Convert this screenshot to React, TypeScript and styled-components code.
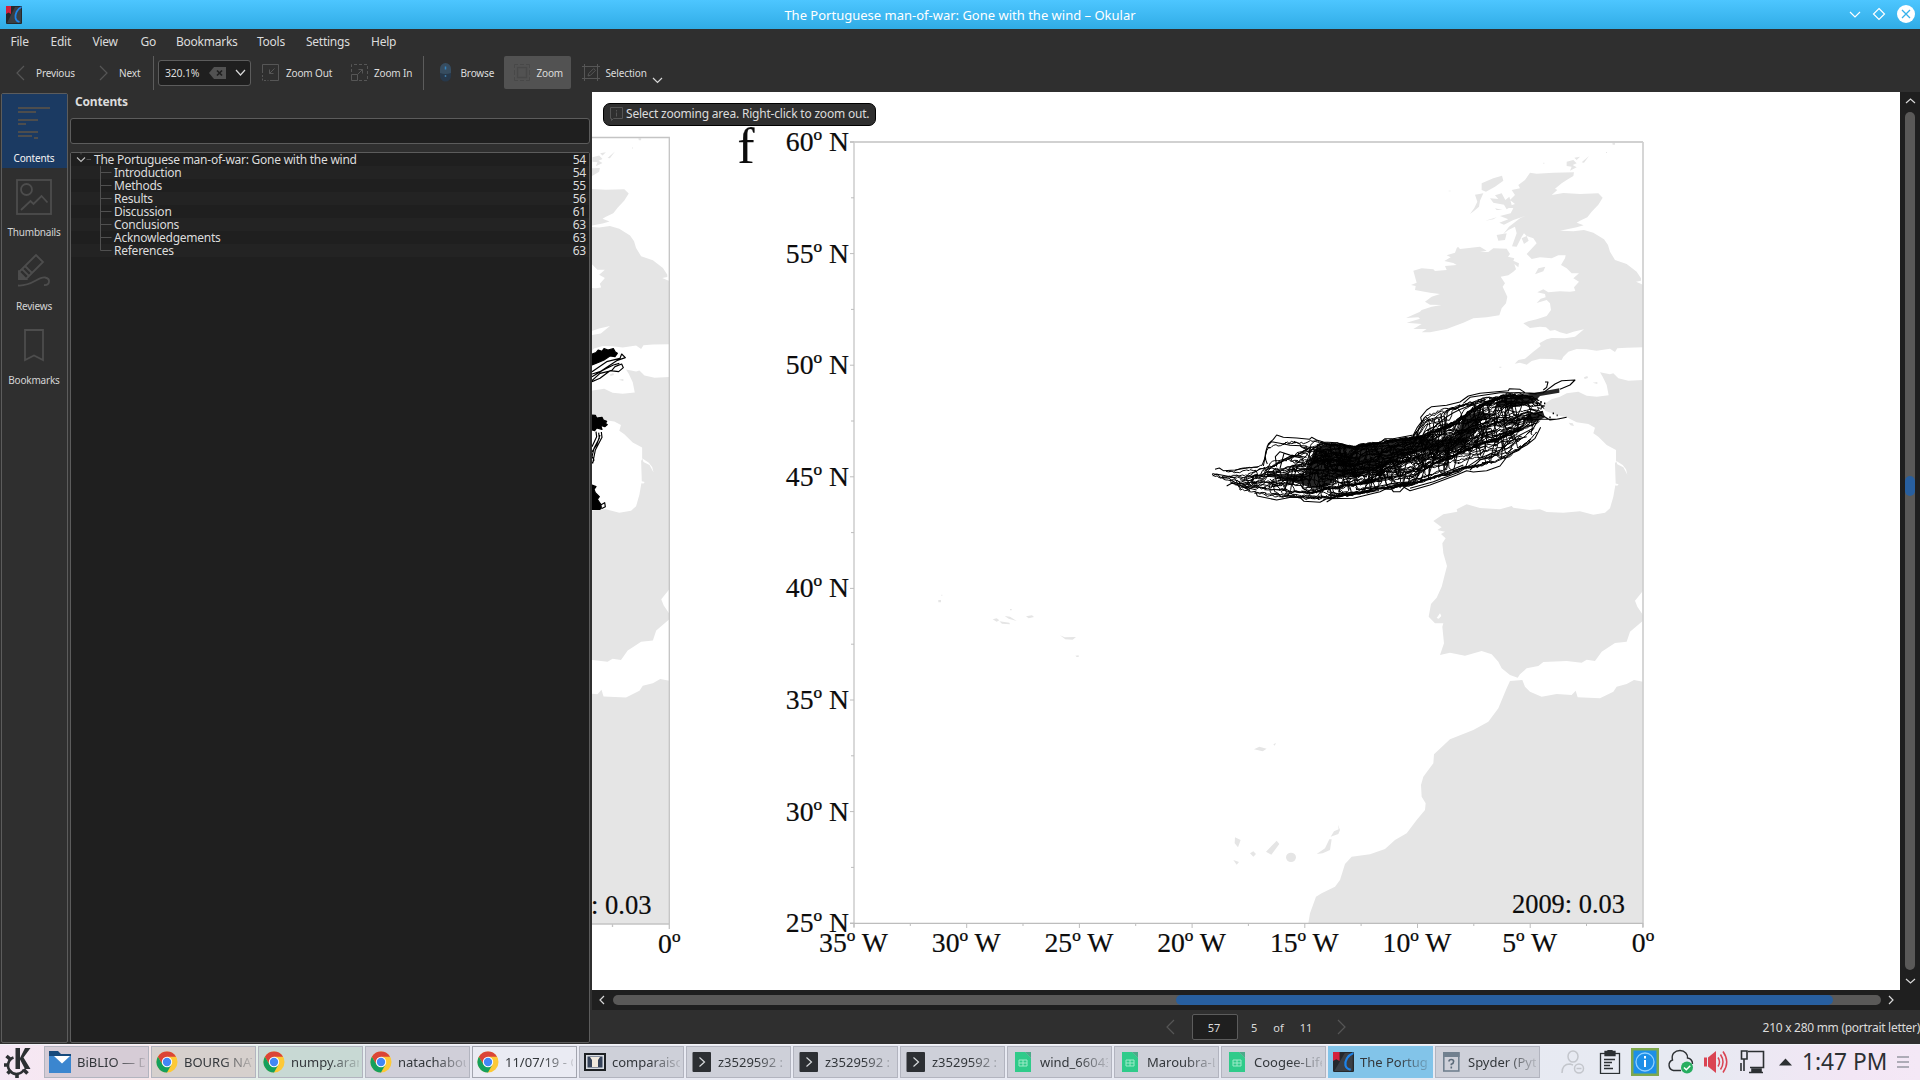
import React from "react";
import styled, { createGlobalStyle, css } from "styled-components";

const sans = `"Noto Sans", "Open Sans", sans-serif`;
const serif = `"Liberation Serif", "Times New Roman", serif`;

const Global = createGlobalStyle`
  * { box-sizing: border-box; }
  html, body { margin: 0; padding: 0; overflow: hidden; }
  body { font-family: ${sans}; background: #2f2f2f; }
  svg { display: block; flex: none; }
`;

const Desktop = styled.div`
  width: 1920px;
  height: 1080px;
  display: flex;
  flex-direction: column;
  background: #2f2f2f;
  color: #dcdcdc;
  overflow: hidden;
`;

/* ---------- window frame ---------- */

const TitleBar = styled.header`
  flex: none;
  height: 29px;
  display: grid;
  grid-template-columns: 120px 1fr 120px;
  align-items: center;
  background: linear-gradient(#4dc6ff, #30ace6);
`;

const TitleIcon = styled.div`
  padding-left: 6px;
`;

const Title = styled.h1`
  margin: 0;
  text-align: center;
  font-size: 13px;
  line-height: 28px;
  font-weight: 400;
  color: #fff;
`;

const WindowButtons = styled.div`
  display: flex;
  justify-content: flex-end;
  align-items: center;
  gap: 7px;
  padding-right: 5px;
  padding-bottom: 1px;
`;

const MenuBar = styled.nav`
  flex: none;
  height: 25px;
  padding-left: 10.5px;
  display: flex;
`;

const MenuItem = styled.span<{ $w: number }>`
  width: ${(p) => p.$w}px;
  font-size: 12px;
  line-height: 25px;
  letter-spacing: -0.25px;
  white-space: nowrap;
`;

const ToolBar = styled.div`
  flex: none;
  height: 38px;
  display: flex;
  align-items: center;
  padding-bottom: 1px;
`;

const ToolButton = styled.div<{ $w: number; $pad: number; $gap: number; $on?: boolean }>`
  width: ${(p) => p.$w}px;
  height: 33px;
  padding-left: ${(p) => p.$pad}px;
  display: flex;
  align-items: center;
  gap: ${(p) => p.$gap}px;
  font-size: 10px;
  line-height: 14px;
  letter-spacing: -0.15px;
  white-space: nowrap;
  border-radius: 2px;
  ${(p) => p.$on && css`background: #525252;`}
`;

const ToolSeparator = styled.div`
  width: 1px;
  height: 34px;
  background: #5c5c5c;
`;

const ZoomBox = styled.div`
  width: 93px;
  height: 26px;
  margin: 0 3px 0 4px;
  padding: 0 4px 0 6px;
  display: flex;
  align-items: center;
  border: 1px solid #5c5c5c;
  border-radius: 3px;
  background: #1f1f1f;
  font-size: 10.5px;
  letter-spacing: -0.2px;
`;

const ZoomValue = styled.span`
  flex: 1;
`;

const ZoomTools = styled.div`
  display: flex;
  align-items: center;
  gap: 9px;
`;

/* ---------- main area ---------- */

const Main = styled.main`
  flex: none;
  height: 952px;
  display: flex;
`;

const SideTabs = styled.aside`
  width: 67px;
  height: 950px;
  margin: 1px 0 0 1px;
  border: 1px solid #5c5c5c;
  border-radius: 2px;
`;

const SideTab = styled.div<{ $on?: boolean }>`
  height: 74px;
  display: flex;
  flex-direction: column;
  align-items: center;
  padding-top: 9px;
  padding-right: 1px;
  background: ${(p) => (p.$on ? "#1b3a62" : "transparent")};
`;

const SideLabel = styled.span<{ $on?: boolean }>`
  margin-top: 8px;
  font-size: 10px;
  line-height: 14px;
  letter-spacing: -0.2px;
  color: ${(p) => (p.$on ? "#f4f4f4" : "#d4d4d4")};
`;

const ContentsPanel = styled.section`
  width: 520px;
  height: 951px;
  margin: 0 2px;
  display: flex;
  flex-direction: column;
`;

const PanelTitle = styled.h2`
  margin: 0;
  padding-left: 5px;
  height: 26px;
  font-size: 12px;
  line-height: 19px;
  font-weight: 700;
  letter-spacing: -0.2px;
`;

const SearchBox = styled.div`
  height: 26px;
  margin-bottom: 8px;
  border: 1px solid #5c5c5c;
  border-radius: 3px;
  background: #1f1f1f;
`;

const Tree = styled.div`
  flex: 1;
  border: 1px solid #5c5c5c;
  border-radius: 2px;
  background: #1f1f1f;
`;

const TreeRow = styled.div<{ $alt: boolean }>`
  height: 13px;
  display: flex;
  align-items: center;
  padding-right: 3px;
  background: ${(p) => (p.$alt ? "#232323" : "#1f1f1f")};
  font-size: 12px;
  line-height: 13px;
  letter-spacing: -0.2px;
  white-space: nowrap;
`;

const RowName = styled.span`
  flex: 1;
  letter-spacing: -0.25px;
`;

const DocColumn = styled.section`
  flex: 1;
  display: flex;
  flex-direction: column;
`;

const DocRow = styled.div`
  height: 898px;
  display: flex;
`;

const Page = styled.div`
  position: relative;
  width: 1308px;
  height: 898px;
  background: #fff;
  overflow: hidden;
`;

const Notice = styled.div`
  position: absolute;
  left: 11px;
  top: 11px;
  width: 273px;
  height: 23px;
  display: flex;
  align-items: center;
  gap: 3px;
  padding: 0 0 2px 6px;
  border: 1px solid #000;
  border-radius: 7px;
  background: #2f2f2f;
  font-size: 12px;
  letter-spacing: -0.2px;
  line-height: 19px;
  white-space: nowrap;
`;

const VScroll = styled.div`
  width: 20px;
  padding: 6px 0 6px;
  display: flex;
  flex-direction: column;
  align-items: center;
  justify-content: space-between;
  background: #1f1f1f;
`;

const VGroove = styled.div`
  width: 10px;
  height: 858px;
  padding-top: 364px;
  border-radius: 5px;
  background: #5a5958;
`;

const VThumb = styled.div`
  height: 20px;
  border-radius: 5px;
  background: #285f9f;
`;

const HScroll = styled.div`
  height: 20px;
  padding: 0 26px 0 7px;
  display: flex;
  align-items: center;
  justify-content: space-between;
  background: #1f1f1f;
`;

const HGroove = styled.div`
  width: 1268px;
  height: 10px;
  padding-left: 563px;
  border-radius: 5px;
  background: #5a5958;
`;

const HThumb = styled.div`
  width: 657px;
  height: 10px;
  border-radius: 5px;
  background: #285f9f;
`;

const StatusBar = styled.div`
  height: 34px;
  display: flex;
  align-items: center;
  padding-left: 574px;
  font-size: 11px;
  white-space: nowrap;
`;

const PageField = styled.div`
  width: 46px;
  height: 26px;
  margin: 0 13px 0 17px;
  padding-right: 2px;
  display: flex;
  align-items: center;
  justify-content: center;
  border: 1px solid #5c5c5c;
  border-radius: 2px;
  background: #1f1f1f;
`;

const PageCount = styled.div`
  width: 86px;
  display: flex;
  gap: 16px;
`;

const PageSize = styled.span`
  margin-left: auto;
  font-size: 12px;
  letter-spacing: -0.28px;
`;

/* ---------- task bar ---------- */

const TaskBar = styled.footer`
  flex: none;
  height: 36px;
  display: flex;
  align-items: center;
  box-shadow: inset 0 1px #f3f3f8;
  background: linear-gradient(90deg, #f5e7f5 0, #f8e8ea 160px, #dff0e9 280px, #e9eaf3 420px, #e7eaf2 1700px, #f3e6f5 1850px, #f4e8f6 100%);
`;

const Launcher = styled.div`
  width: 44px;
  padding-left: 3px;
`;

const Tasks = styled.div`
  display: flex;
  gap: 2px;
`;

const Task = styled.div<{ $kind?: "light" | "active"; $tint?: string }>`
  width: 105px;
  height: 32px;
  padding-left: 4px;
  display: flex;
  align-items: center;
  gap: 6px;
  overflow: hidden;
  color: #33373b;
  border: 1px solid #b2b4bf;
  background: ${(p) => p.$tint ?? "#ced0d9"};
  ${(p) => p.$kind === "light" && css`background: #eaebf3; border-color: #a2a4ae;`}
  ${(p) => p.$kind === "active" && css`background: #82c4e9; border-color: #82c4e9;`}
`;

const TaskName = styled.span`
  flex: 1;
  overflow: hidden;
  font-size: 13px;
  line-height: 20px;
  white-space: nowrap;
  margin-right: 3px;
  mask-image: linear-gradient(90deg, #000 55%, rgba(0, 0, 0, 0.15) 100%);
`;

const Tray = styled.div`
  flex: 1;
  display: flex;
  align-items: center;
  padding-left: 21px;
`;

const TraySlot = styled.div<{ $w: number }>`
  width: ${(p) => p.$w}px;
`;

const Clock = styled.span`
  width: 95px;
  font-size: 22.7px;
  line-height: 30px;
  color: #2c3033;
  white-space: nowrap;
`;

/* ---------- small icons ---------- */

type ChevronProps = { d: "l" | "r" | "u" | "d"; w: number; h: number; c: string };
const Chevron = ({ d, w, h, c }: ChevronProps) => {
  const pts = {
    l: `${w - 1},1 1,${h / 2} ${w - 1},${h - 1}`,
    r: `1,1 ${w - 1},${h / 2} 1,${h - 1}`,
    u: `1,${h - 1} ${w / 2},1 ${w - 1},${h - 1}`,
    d: `1,1 ${w / 2},${h - 1} ${w - 1},1`,
  }[d];
  return (
    <svg width={w} height={h}>
      <polyline points={pts} fill="none" stroke={c} strokeWidth="1.2" />
    </svg>
  );
};

const OkularIcon = ({ w, h }: { w: number; h: number }) => (
  <svg width={w} height={h} viewBox="0 0 16 18" preserveAspectRatio="none">
    <rect width="16" height="18" rx="1" fill="#25282c" />
    <path d="M1 17L9 1h6v16z" fill="#3a3f45" />
    <path d="M0 0h5v8L2.500 6.500 0 8z" fill="#d4213d" />
    <path d="M15.500 1C11 3 9 8 9.500 12q.5 3 4 4" fill="none" stroke="#1d84ea" strokeWidth="1.700" />
  </svg>
);

const g = "#565656";

const ZoomOutIcon = () => (
  <svg width="17" height="17" fill="none" stroke={g}>
    <path d="M.5 9V.5h16v16H8" />
    <path d="M12.500 4.500l-5 5M7.500 5.500v4h4" />
    <path d="M.5 11v5.500h6" strokeDasharray="2 1.500" />
  </svg>
);

const ZoomInIcon = () => (
  <svg width="17" height="17" fill="none" stroke={g}>
    <path d="M.5 8V.5h16v16H8" strokeDasharray="3 2" />
    <path d="M.5 10.500h6v6h-6zM6.500 10.500l5-5M7.500 5.500h4v4" />
  </svg>
);

const MouseIcon = () => (
  <svg width="13" height="19">
    <rect x="1" y=".5" width="11" height="18" rx="5.500" fill="#27384a" />
    <path d="M6.500 0a5.500 6 0 0 0-5.500 6v4q5.500 2 11 0V6a5.500 6 0 0 0-5.500-6z" fill="#374d60" />
    <path d="M6.500 3.500v3" stroke="#3584c0" strokeWidth="1.500" />
    <circle cx="6.500" cy="13" r=".9" fill="#3f7ba8" />
  </svg>
);

const ZoomIcon = () => (
  <svg width="16" height="17" fill="none" stroke="#484848">
    <rect x="3.500" y="3.500" width="9" height="10" strokeWidth="1.300" />
    <path d="M.5 4V.5H4M6 .5h4M12 .5h3.500V4M15.500 6v5M15.500 13v3.500H12M10 16.500H6M4 16.500H.5V13M.5 11V6" />
  </svg>
);

const SelectionIcon = () => (
  <svg width="18" height="17" fill="none" stroke={g}>
    <path d="M0 2.500h18M0 14.500h18M2.500 0v17M15.500 0v17" />
    <path d="M6 12l.7-2.500 5-5 1.800 1.800-5 5z" />
  </svg>
);

const ClearIcon = () => (
  <svg width="17" height="12">
    <path d="M0 6l5-6h12v12H5z" fill="#525252" />
    <path d="M8 3.500l5 5M13 3.500l-5 5" stroke="#1f1f1f" strokeWidth="1.700" />
  </svg>
);

const tab = "#4d4d4d";
const ContentsIcon = () => (
  <svg width="40" height="40" fill={tab}>
    <path d="M4 4h32v2H4zM4 8h18v2H4zM4 16h20v2H4zM4 20h8v2H4zM4 28h20v2H4zM4 32h14v2H4zM20 34h4v2h-4z" />
  </svg>
);
const ThumbsIcon = () => (
  <svg width="40" height="40" fill="none" stroke={tab} strokeWidth="1.800">
    <rect x="3" y="3" width="34" height="34" />
    <circle cx="12.500" cy="12.500" r="5.500" />
    <path d="M7 33l9.500-9 3 3 8-8 6 6.500" />
  </svg>
);
const ReviewsIcon = () => (
  <svg width="40" height="40" fill="none" stroke={tab} strokeWidth="1.800">
    <path d="M5 21L22 4l7 7-17 17H5z" />
    <path d="M5 21l7 7H5zM8 18l7 7M11 15l7 7" fill={tab} />
    <path d="M4 34.500c14 1 20-9 27-8 6 1 5 8-1 7.500" />
  </svg>
);
const BookmarkIcon = () => (
  <svg width="40" height="40" fill="none" stroke={tab} strokeWidth="1.800">
    <path d="M11 5h18v30l-9-4.500L11 35z" />
  </svg>
);

const TreeBranch = ({ kind }: { kind: "root" | "mid" | "last" }) =>
  kind === "root" ? (
    <svg width="23" height="13" fill="none">
      <path d="M6 4.500l4 4 4-4" stroke="#c0c0c0" strokeWidth="1.100" />
      <path d="M15.500 6.500h4.500M10 0v1.500" stroke="#505050" />
    </svg>
  ) : (
    <svg width="43" height="13" fill="none" stroke="#505050">
      <path d={kind === "mid" ? "M29.500 0v13M29.500 6.500h11" : "M29.500 0v6.500h11"} />
    </svg>
  );

/* ---------- task icons ---------- */

const KdeIcon = () => (
  <svg width="29" height="32" viewBox="0 0 29 32">
    <path d="M10.500 11.500A8.500 8.500 0 1 0 21 23.500" fill="none" stroke="#2c3033" strokeWidth="2.600" />
    <path d="M3.500 10l3.500 3M1 19h5M4.500 27.500l3.500-3.500M14 32v-5M24.500 27.500l-4-4" stroke="#2c3033" strokeWidth="3.600" />
    <path d="M12.500 2h4.500v10L22 2h5.500L20.500 11.500 27.500 23H22L17 13.500V23h-4.500z" fill="#2c3033" />
  </svg>
);
const FolderIcon = () => (
  <svg width="22" height="22">
    <path d="M0 0h9l3 3h10v8H0z" fill="#174a7c" />
    <path d="M0 5h22v17H0z" fill="#3b86cf" />
    <path d="M5 5h16l-8 7.500z" fill="#fff" />
  </svg>
);
const ChromeIcon = () => (
  <svg width="22" height="24" viewBox="0 0 22 24">
    <circle cx="11" cy="12" r="10.500" fill="#fdc936" />
    <path d="M1.900 6.750A10.500 10.500 0 0 1 20.100 6.750H11L6.500 14.600z" fill="#db4437" />
    <path d="M1.900 6.750A10.500 10.500 0 0 0 11 22.500L15.500 14.600 11 17 6.500 14.600z" fill="#14a05c" />
    <circle cx="11" cy="12" r="5.200" fill="#fff" />
    <circle cx="11" cy="12" r="4.200" fill="#4387f5" />
  </svg>
);
const ImageIcon = () => (
  <svg width="22" height="18">
    <rect x="1" y="1" width="20" height="16" fill="#d8dce2" stroke="#1d2023" strokeWidth="2" />
    <rect x="3.500" y="3.500" width="15" height="11" fill="#36435a" />
    <path d="M6 4h10l-2 3v7H8V7z" fill="#f1e9dd" />
  </svg>
);
const TermIcon = () => (
  <svg width="21" height="20">
    <rect x="1.500" width="18.500" height="20" rx="1" fill="#2c2f33" />
    <path d="M8.500 5.500l5 4.500-5 4.500" fill="none" stroke="#d7dadd" strokeWidth="1.200" />
  </svg>
);
const SheetIcon = () => (
  <svg width="22" height="20">
    <path d="M3 0h10l6 6v14H3z" fill="#2fcb8a" />
    <path d="M13 0l6 6V0z" fill="#159a68" opacity=".7" />
    <path d="M7 8h8v6H7zM7 11h8M11 8v6" fill="none" stroke="#9debc8" />
  </svg>
);
const UnknownIcon = () => (
  <svg width="22" height="20">
    <rect x="3.800" y="1" width="15" height="18" fill="none" stroke="#71808f" strokeWidth="1.600" />
    <rect x="3" y="0" width="16.600" height="5" fill="#71808f" />
    <path d="M9 9.500q0-2 2.300-2t2.300 2-2.300 2.800v1M11.300 14.500v2" fill="none" stroke="#5b6a79" strokeWidth="1.600" />
  </svg>
);

const tasks: { name: string; icon: React.ReactNode; kind?: "light" | "active"; tint?: string }[] = [
  { name: "BiBLIO — D", icon: <FolderIcon />, tint: "#d6ccd6" },
  { name: "BOURG NAT", icon: <ChromeIcon />, tint: "#d6d0cd" },
  { name: "numpy.aran", icon: <ChromeIcon />, tint: "#c8d9d4" },
  { name: "natachabou", icon: <ChromeIcon />, tint: "#d0cfd9" },
  { name: "11/07/19 - G", icon: <ChromeIcon />, kind: "light" },
  { name: "comparaiso", icon: <ImageIcon /> },
  { name: "z3529592 :", icon: <TermIcon /> },
  { name: "z3529592 :", icon: <TermIcon /> },
  { name: "z3529592 :", icon: <TermIcon /> },
  { name: "wind_66043", icon: <SheetIcon /> },
  { name: "Maroubra-L", icon: <SheetIcon /> },
  { name: "Coogee-Life", icon: <SheetIcon /> },
  { name: "The Portug", icon: <OkularIcon w={21} h={20} />, kind: "active" },
  { name: "Spyder (Pyt", icon: <UnknownIcon /> },
];

const ink = "#2c3033";
const UserIcon = () => (
  <svg width="24" height="24" fill="none" stroke="#c3c6cc" strokeWidth="1.500">
    <ellipse cx="12" cy="6.500" rx="5" ry="5.500" />
    <path d="M1 23q0-9 8-9l3 1" />
    <circle cx="18" cy="18.500" r="4.500" />
    <path d="M15.500 18.500h5" />
  </svg>
);
const ClipIcon = () => (
  <svg width="22" height="24" fill="none" stroke={ink} strokeWidth="1.300">
    <rect x="1.500" y="3.500" width="19" height="20" />
    <path d="M6 1.500h10v4H6z" fill={ink} />
    <path d="M9 0h4v2H9z" fill={ink} />
    <path d="M5 9.500h11M5 12.500h8M5 15.500h6M5 18.500h9" />
  </svg>
);
const InfoIcon = () => (
  <svg width="28" height="28">
    <rect width="28" height="28" fill="#7ea84d" />
    <rect x="2.500" y="2.500" width="23" height="23" fill="#1d8fe8" />
    <circle cx="14" cy="14" r="9" fill="none" stroke="#8fd0ff" strokeWidth="1.300" />
    <path d="M14 8v2.500M14 12v7" stroke="#fff" strokeWidth="2" />
  </svg>
);
const CloudIcon = () => (
  <svg width="28" height="26">
    <path d="M14 21.500H6.500a5.500 5.500 0 0 1-1-10.500C4 5 8 1.500 13 1.500s8 4 7.500 7.500c3 .5 5 3 5 6" fill="none" stroke={ink} strokeWidth="1.400" />
    <circle cx="20" cy="18.500" r="6" fill="#27ae60" />
    <path d="M17 18.500l2.300 2.300 4-4" fill="none" stroke="#fff" strokeWidth="1.500" />
  </svg>
);
const SpeakerIcon = () => (
  <svg width="25" height="24" fill="none" stroke="#da4453" strokeWidth="1.800">
    <path d="M0 7.500h3v9H0z" fill="#da4453" stroke="none" />
    <path d="M4 7.500L12 1v22L4 16.500z" fill="#da4453" stroke="none" />
    <path d="M14 7.500q3 4.500 0 9M16.500 4.500q5 7.500 0 15M19 1.500q7.500 10.500 0 21" strokeWidth="1.500" />
  </svg>
);
const NetIcon = () => (
  <svg width="26" height="24" fill="none" stroke={ink} strokeWidth="1.600">
    <path d="M8 1.500h15.500v16H10" />
    <path d="M1.500 1h5.500v8H1.500zM4 9v12M1 13v8" />
    <path d="M12 19h9v3H12zM9 22.500h14" fill={ink} />
  </svg>
);

/* ---------- map ---------- */

/* Land outlines in third-of-a-pixel units, origin at (1380, 130) of the screen. */
const land = [
  "M450 128L470 131 520 128 582 127 580 138 560 150 545 160 525 176 532 180 515 195 550 189 600 192 655 190 668 203 655 224 635 245 622 262 600 272 590 278 611 286 590 292 540 302 580 304 612 300 640 308 672 328 684 345 690 365 705 390 740 402 770 425 783 445 783 452 768 455 789 464V652L740 653 712 655 705 666 690 656 650 662 620 658 590 657 565 665 550 680 545 690 515 687 480 686 455 693 440 704 420 698 404 701 415 690 435 686 460 665 482 648 478 640 500 628 515 624 555 625 585 620 612 598 580 605 560 612 540 607 525 600 510 602 498 592 480 590 450 594 430 580 445 574 470 568 500 558 513 540 510 520 500 510 470 519 482 506 497 502 495 492 472 487 490 478 505 487 540 484 570 485 586 483 582 472 597 455 580 445 597 430 575 430 560 415 543 405 555 385 557 376 535 376 515 385 480 382 455 387 462 394 440 372 470 340 460 325 440 318 432 310 425 320 410 350 396 349 410 310 405 290 385 300 370 312 387 290 420 265 435 258 400 270 372 284 358 278 385 268 360 258 392 250 400 235 380 230 405 222 390 210 405 195 395 180 420 175 415 165 435 150Z",
  "M230 355L234 350 240 357 260 355 300 350 320 362 300 366 325 366 340 355 380 356 390 372 384 380 403 385 400 392 417 400 415 412 403 402 408 418 400 425 385 436 362 440 375 460 368 470 382 500 378 520 365 535 358 556 320 562 280 565 250 578 200 597 150 607 125 607 140 597 100 597 125 582 80 578 120 566 115 562 78 564 120 545 125 540 155 530 185 525 150 524 135 515 155 500 180 492 150 488 105 480 107 468 93 465 110 458 100 422 125 415 160 418 165 423 200 420 195 408 230 405 220 399 193 393 212 382 200 376 225 368Z",
  "M305 160L340 145 366 137 370 152 345 170 318 185 305 180Z",
  "M285 194L310 190 300 212 297 230 283 242 270 252 283 234 292 215Z",
  "M330 205L355 207 345 196 365 190 376 210 388 200 396 228 380 238 372 224 340 218Z",
  "M316 272L350 262 340 268Z M350 315L380 310 375 330 355 332Z M425 325L440 318 446 332 432 342Z M345 235L368 240 350 240Z",
  "M465 433L475 415 496 410 490 424Z",
  "M560 95L580 90 590 100 578 105 590 112 570 122 575 110 560 108Z M583 83L600 80 590 90Z M605 97L627 78 612 98Z",
  "M697 38h8v6h-7z M678 66h3v3h-3z M490 98h3v3h-3z M206 182h6v2h-6z M358 710h6v3h-6z",
  "M789 750L745 752 715 745 700 730 690 733 660 727 668 740 680 765 686 796 650 800 620 797 595 785 560 790 540 800 515 808 492 822 495 842 530 855 560 862 590 877 625 882 645 893 640 910 655 920 680 945 708 960 708 995 705 1000 707 1060 700 1100 690 1135 675 1148 640 1154 600 1144 550 1148 500 1146 480 1138 450 1140 400 1133 395 1128 360 1138 300 1134 260 1123 230 1138 232 1145 190 1153 160 1173 185 1192 172 1200 195 1205 183 1212 197 1225 187 1240 190 1270 201 1308 185 1370 170 1403 153 1422 146 1460 165 1480 190 1480 187 1490 192 1540 180 1575 210 1568 255 1577 305 1563 335 1573 355 1595 365 1615 390 1635 413 1643 420 1633 440 1615 475 1608 490 1596 560 1593 605 1598 620 1589 645 1593 665 1565 705 1539 740 1535 750 1505 789 1472V1455L772 1430 765 1412 789 1382Z",
  "M789 1655L762 1650 740 1662 710 1670 700 1685 660 1705 593 1702 587 1682 575 1695 530 1692 485 1700 450 1685 435 1670 427 1650 390 1653 380 1675 355 1735 325 1775 280 1800 210 1828 162 1873 160 1900 130 1940 123 1965 125 2000 137 2020 135 2040 110 2070 80 2110 45 2130 15 2157-30 2173-85 2180-105 2202-120 2250-135 2270-175 2290-192 2300-210 2350-215 2380H789Z",
  "M-282 2182a15 14 0 1 0 30 0a15 14 0 1 0-30 0 M-190 2172L-165 2155-152 2128-145 2128-150 2160-172 2170Z M-148 2120L-138 2104-124 2098-126 2084-120 2100-125 2112Z",
  "M-435 2122L-418 2130-426 2152-436 2140Z M-390 2170l10-6 8 8-8 8z M-342 2165L-310 2132-302 2142-326 2174Z M-440 2190L-423 2196-430 2204Z M-378 1858L-362 1850-340 1856-352 1864Z M-320 1843l8-4-4 8z",
  "M-1325 1410h8v7h-8z M-1316 1394h3v3h-3z M-1162 1468l12-3 8 6-8 4z M-1142 1474l30 4 2 5-24-2z M-1126 1458l16 2 20 13-24-7z M-1062 1459l18-3 6 5-16 4z M-1110 1437h5v4h-5z M-960 1516l14 6 34-1-10 8-22-1z M-914 1577l10-1 0 5-6 0z",
];

/* White inlets cut into the land. */
const inlets = [
  "M708 992L728 1005 738 1018 742 1034 730 1012 712 1003Z",
  "M170 1464L180 1450 184 1458 176 1466Z",
  "M704 1060l12 3-4 4-8-1z",
];

const isletsFrance = "M612 742l10-4 2 6-10 3z M638 758l14-2 0 6z M566 878l12 2 4 8-10-2z";

const Land = () => (
  <g transform="translate(1380 130) scale(.33333)">
    <path d={land.join(" ")} fill="#e5e5e5" />
    <path d={isletsFrance} fill="#e5e5e5" />
    <path d={inlets.join(" ")} fill="#fff" />
  </g>
);

/* Seeded generator so the drift tracks are identical on each render. */
const seeded = (seed: number) => () => {
  seed = (seed * 1664525 + 1013904223) % 4294967296;
  return seed / 4294967296;
};

/* x, upper edge, lower edge of the bundle of tracks */
const envelope = [
  [100, 398, 412], [150, 390, 438], [225, 382, 458], [250, 372, 462], [262, 325, 464],
  [290, 312, 466], [400, 304, 476], [450, 310, 472], [520, 320, 462], [600, 308, 448],
  [650, 298, 440], [700, 288, 432], [740, 222, 418], [800, 208, 402], [850, 196, 385],
  [900, 180, 375], [980, 164, 352], [1020, 160, 325], [1060, 172, 290], [1085, 190, 255], [1100, 205, 235],
];
const core = [
  [100, 400, 410], [200, 396, 445], [260, 385, 445], [380, 330, 460], [430, 312, 450],
  [520, 320, 435], [620, 304, 415], [720, 292, 390], [820, 250, 350], [880, 205, 320],
  [960, 172, 295], [1040, 168, 260], [1085, 195, 245], [1100, 210, 230],
];
const edge = (t: number[][], x: number, k: number) => {
  for (let i = 1; i < t.length; i++)
    if (x <= t[i][0]) {
      const r = (x - t[i - 1][0]) / (t[i][0] - t[i - 1][0]);
      return t[i - 1][k] + r * (t[i][k] - t[i - 1][k]);
    }
  return t[t.length - 1][k];
};

const makeTracks = (table: number[][], count: number, seed: number) => {
  const rnd = seeded(seed);
  const out: string[] = [];
  for (let n = 0; n < count; n++) {
    const far = rnd();
    let x = far < 0.35 ? 100 + rnd() * 140 : 250 + rnd() * 230;
    const end = 1000 + rnd() * 95;
    let f = rnd();
    let aim = f;
    const p = rnd() * 6;
    let d = "";
    while (x < end) {
      if (rnd() < 0.1) aim = Math.min(1, Math.max(0, aim + (rnd() - 0.5) * 0.9));
      const jump = Math.abs(aim - f) > 0.12;
      f += (aim - f) * 0.4;
      const u = edge(table, x, 1);
      const l = edge(table, x, 2);
      const y = u + (l - u) * f + Math.sin(x / 11 + p) * 2.5 + (rnd() - 0.5) * 6;
      d += (d ? "L" : "M") + x.toFixed(0) + " " + y.toFixed(0);
      x += rnd() < 0.12 ? -4 : jump ? 1 + rnd() * 3 : 3 + rnd() * 8;
    }
    out.push(d);
  }
  return out.join("");
};

const tracks = makeTracks(envelope, 34, 7) + makeTracks(core, 34, 21);

const outerTracks = [
  "M262 372C250 350 258 330 265 312L280 298 290 285 310 292 350 294 388 298 395 292 410 300 430 306 470 308 520 320 600 308 615 296 640 296 700 285 712 262 725 245 722 232 740 210 755 200 800 196 840 186 865 168 900 160 985 152 988 146 1020 148 1035 158 1062 160 1090 158 1125 132 1145 122 1185 120 1170 135 1140 148",
  "M250 378L262 318 275 305 300 310 330 316 380 318M290 380L286 350 300 335 330 345 380 352M300 385L312 340 345 350 370 355",
  "M228 458L232 468 290 480 340 470 362 474 372 484 420 487 440 476 520 475 600 455 630 440 640 455 660 455 672 442 690 452 750 435 830 405 860 392 880 396 920 392 960 378 985 345 1040 315 1065 295 1082 262",
  "M105 388L118 384 130 392 165 390 200 384 235 380M98 408L108 402 140 408 170 415M140 438L155 430 180 436 210 452M150 425L190 440 230 450",
  "M430 478L470 470 500 465 545 460 590 440 640 430 700 428M440 486L480 462 520 458M560 455L610 444 650 436 720 425 790 400 850 375",
  "M690 445L760 425 840 395 900 355 960 330 1010 290 1060 265 1075 240M870 390L900 360 950 345 980 305 1040 290",
  "M1040 240L1085 238 1130 238 1160 232M1090 228L1110 240 1140 236M1095 126L1104 126 1100 142 1090 150",
  "M740 295C770 240 820 215 860 200S960 170 1060 175M850 190L870 172 960 158 1020 158 1070 162",
];

const coreFill =
  "M340 402L378 404 392 360 402 328 430 314 470 312 520 320 600 312 660 297 720 294 800 300 830 285 850 228 900 214 930 222 900 245 870 290 850 320 800 335 740 335 700 340 640 362 610 385 560 400 520 412 470 415 440 440 400 446 360 432 300 415 260 410 262 402Z M950 185L1000 168 1050 162 1090 154 1138 145 1138 158 1080 168 1060 190 1000 200 950 200Z M1040 222L1088 212 1095 232 1060 250 1040 245Z";

const yLabels = ["60", "55", "50", "45", "40", "35", "30", "25"];
const xLabels = ["35", "30", "25", "20", "15", "10", "5"];

const MapChart = () => (
  <svg width="1308" height="898" viewBox="592 92 1308 898">
    <g transform="matrix(1.0067 0 0 1.0067 -984.7 -5.45)">
      <Land />
    </g>
    <path d="M592 137.500H669.300V924H592M612.500 924v3M669.300 924v5" fill="none" stroke="#c4c4c4" strokeWidth="1.300" />
    <Land />

    <g transform="translate(580 90) scale(.33333)" stroke="#000" strokeWidth="3.500" fill="none" strokeLinejoin="round">
      <path d="M36 792L48 788 55 780 66 784 72 776 84 780 100 776 106 786 112 790 105 800 90 798 72 810 60 815 36 825Z M36 975L46 976 50 984 66 982 70 990 80 994 76 1000 82 1004 75 1010 62 1006 66 1018 50 1014 44 1022 36 1020Z M36 1185L48 1190 42 1198 46 1208 58 1220 52 1228 62 1242 64 1252 60 1258H36Z" fill="#000" />
      <path d="M36 845L80 815 120 805 125 792 136 803 110 812 60 845 36 852M36 872L60 850 95 842 105 830 125 822 130 833 116 845 90 842 60 865 36 875M36 860L70 840 100 825 118 820M64 1026L66 1042 46 1080 38 1120M56 1028L58 1045 42 1075 36 1100M48 1025L50 1040 36 1070M60 1035L50 1065 36 1085M36 1100L42 1110 36 1120M62 1245L74 1238 76 1250 64 1256" />
    </g>

    <g transform="translate(1180 340) scale(.33333)" stroke="#000" fill="none" strokeLinejoin="round">
      <path d={tracks} strokeWidth="2.900" />
      <path d={outerTracks.join("")} strokeWidth="3.200" />
      <path d={coreFill} fill="#000" stroke="none" opacity=".85" />
      <path d="M1068 190h6M1080 186h6M1084 198h10M1092 190h4M1082 204h4M1118 220h4M1130 226h3M1108 232h4" strokeWidth="5" />
    </g>

    <g fill="none" stroke="#bdbdbd">
      <path d="M850 142H1643" stroke="#c2c2c2" strokeWidth="1.700" />
      <path d="M1643 142V927" stroke="#cfcfcf" strokeWidth="1.700" />
      <path d="M854 142V927" stroke="#cccccc" strokeWidth="1.500" />
      <path d="M850 923.300H1643" strokeWidth="1.200" />
      {yLabels.map((v, i) => (
        <path key={v} d={`M850 ${142 + i * 111.6}h4${i < 7 ? `m-3 55.800h3` : ""}`} />
      ))}
      {[...xLabels, "0"].map((v, i) => (
        <path key={v} d={`M${854 + i * 112.7} 923v5${i < 7 ? `m56.300-5v3` : ""}`} />
      ))}
    </g>

    <g fontFamily={serif} fontSize="27.700" fill="#0c0c0c" stroke="#0c0c0c" strokeWidth=".2">
      {yLabels.map((v, i) => (
        <text key={v} x="849" y={151 + i * 111.6} textAnchor="end">{v}º N</text>
      ))}
      {xLabels.map((v, i) => (
        <text key={v} x={853.5 + i * 112.7} y="952.300" textAnchor="middle">{v}º W</text>
      ))}
      <text x="1643" y="952.300" textAnchor="middle">0º</text>
      <text x="669.300" y="953" textAnchor="middle">0º</text>
      <text x="1512" y="913" fontSize="28.300" textLength="113" lengthAdjust="spacingAndGlyphs">2009: 0.03</text>
      <text x="591" y="913.600" fontSize="28.300" textLength="60.500" lengthAdjust="spacingAndGlyphs">: 0.03</text>
      <text x="737.500" y="162.500" fontSize="51">f</text>
    </g>
  </svg>
);

/* ---------- data ---------- */

const menus: [string, number][] = [
  ["File", 40], ["Edit", 42], ["View", 48], ["Go", 35.5], ["Bookmarks", 81], ["Tools", 49], ["Settings", 65], ["Help", 60],
];

const chapters: [string, string][] = [
  ["The Portuguese man-of-war: Gone with the wind", "54"],
  ["Introduction", "54"],
  ["Methods", "55"],
  ["Results", "56"],
  ["Discussion", "61"],
  ["Conclusions", "63"],
  ["Acknowledgements", "63"],
  ["References", "63"],
];

const tabs: [string, React.ReactNode][] = [
  ["Contents", <ContentsIcon />],
  ["Thumbnails", <ThumbsIcon />],
  ["Reviews", <ReviewsIcon />],
  ["Bookmarks", <BookmarkIcon />],
];

export default function App() {
  return (
    <Desktop>
      <Global />
      <TitleBar>
        <TitleIcon><OkularIcon w={16} h={18} /></TitleIcon>
        <Title>The Portuguese man-of-war: Gone with the wind – Okular</Title>
        <WindowButtons>
          <Chevron d="d" w={12} h={7} c="#fff" />
          <svg width="22" height="14"><path d="M11 1.500l5.500 5.500-5.500 5.500L5.500 7z" fill="none" stroke="#fff" strokeWidth="1.200" /></svg>
          <svg width="18" height="18">
            <circle cx="9" cy="9" r="9" fill="#fff" />
            <path d="M5 5l8 8M13 5l-8 8" stroke="#36b2ec" strokeWidth="1.300" />
          </svg>
        </WindowButtons>
      </TitleBar>
      <MenuBar>
        {menus.map(([name, w]) => <MenuItem key={name} $w={w}>{name}</MenuItem>)}
      </MenuBar>
      <ToolBar>
        <ToolButton $w={84} $pad={16} $gap={11}><Chevron d="l" w={9} h={16} c={g} />Previous</ToolButton>
        <ToolButton $w={69} $pad={15} $gap={11}><Chevron d="r" w={9} h={16} c={g} />Next</ToolButton>
        <ToolSeparator />
        <ZoomBox>
          <ZoomValue>320.1%</ZoomValue>
          <ZoomTools><ClearIcon /><Chevron d="d" w={11} h={7} c="#d8d8d8" /></ZoomTools>
        </ZoomBox>
        <ToolButton $w={86} $pad={8} $gap={7}><ZoomOutIcon />Zoom Out</ToolButton>
        <ToolButton $w={83} $pad={11} $gap={6}><ZoomInIcon />Zoom In</ToolButton>
        <ToolSeparator />
        <ToolButton $w={80} $pad={15} $gap={8.5}><MouseIcon />Browse</ToolButton>
        <ToolButton $w={67} $pad={10} $gap={6.5} $on><ZoomIcon />Zoom</ToolButton>
        <ToolButton $w={78} $pad={11} $gap={5.5}><SelectionIcon />Selection</ToolButton>
        <ZoomTools><svg width="14" height="22"><path d="M4 16l4.500 4.500 4.500-4.500" fill="none" stroke="#d8d8d8" strokeWidth="1.200" /></svg></ZoomTools>
      </ToolBar>

      <Main>
        <SideTabs>
          {tabs.map(([name, icon], i) => (
            <SideTab key={name} $on={i === 0}>
              {icon}
              <SideLabel $on={i === 0}>{name}</SideLabel>
            </SideTab>
          ))}
        </SideTabs>
        <ContentsPanel>
          <PanelTitle>Contents</PanelTitle>
          <SearchBox />
          <Tree>
            {chapters.map(([name, page], i) => (
              <TreeRow key={name} $alt={i % 2 === 1}>
                <TreeBranch kind={i === 0 ? "root" : i === 7 ? "last" : "mid"} />
                <RowName>{name}</RowName>
                <span>{page}</span>
              </TreeRow>
            ))}
          </Tree>
        </ContentsPanel>
        <DocColumn>
          <DocRow>
            <Page>
              <MapChart />
              <Notice>
                <svg width="13" height="14" fill="none" stroke="#555"><path d="M.5.5h12v11h-9l-2 2v-2h-1zM6.500 3v1.500M6.500 5.500v4" /></svg>
                Select zooming area. Right-click to zoom out.
              </Notice>
            </Page>
            <VScroll>
              <Chevron d="u" w={11} h={6} c="#d8d8d8" />
              <VGroove><VThumb /></VGroove>
              <Chevron d="d" w={11} h={6} c="#d8d8d8" />
            </VScroll>
          </DocRow>
          <HScroll>
            <Chevron d="l" w={6} h={10} c="#d8d8d8" />
            <HGroove><HThumb /></HGroove>
            <Chevron d="r" w={6} h={10} c="#d8d8d8" />
          </HScroll>
          <StatusBar>
            <Chevron d="l" w={9} h={16} c={g} />
            <PageField>57</PageField>
            <PageCount><span>5</span><span>of</span><span>11</span></PageCount>
            <Chevron d="r" w={9} h={16} c={g} />
            <PageSize>210 x 280 mm (portrait letter)</PageSize>
          </StatusBar>
        </DocColumn>
      </Main>

      <TaskBar>
        <Launcher><KdeIcon /></Launcher>
        <Tasks>
          {tasks.map((t, i) => (
            <Task key={i} $kind={t.kind} $tint={t.tint}>
              {t.icon}
              <TaskName>{t.name}</TaskName>
            </Task>
          ))}
        </Tasks>
        <Tray>
          <TraySlot $w={38}><UserIcon /></TraySlot>
          <TraySlot $w={32}><ClipIcon /></TraySlot>
          <TraySlot $w={36}><InfoIcon /></TraySlot>
          <TraySlot $w={37}><CloudIcon /></TraySlot>
          <TraySlot $w={36}><SpeakerIcon /></TraySlot>
          <TraySlot $w={39}><NetIcon /></TraySlot>
          <TraySlot $w={23}><svg width="13" height="8"><path d="M0 7.500L6.500.5l6.500 7z" fill={ink} /></svg></TraySlot>
          <Clock>1:47 PM</Clock>
          <svg width="12" height="12"><path d="M0 1h12M0 6h12M0 11h12" stroke="#9698a3" strokeWidth="1.500" /></svg>
        </Tray>
      </TaskBar>
    </Desktop>
  );
}
